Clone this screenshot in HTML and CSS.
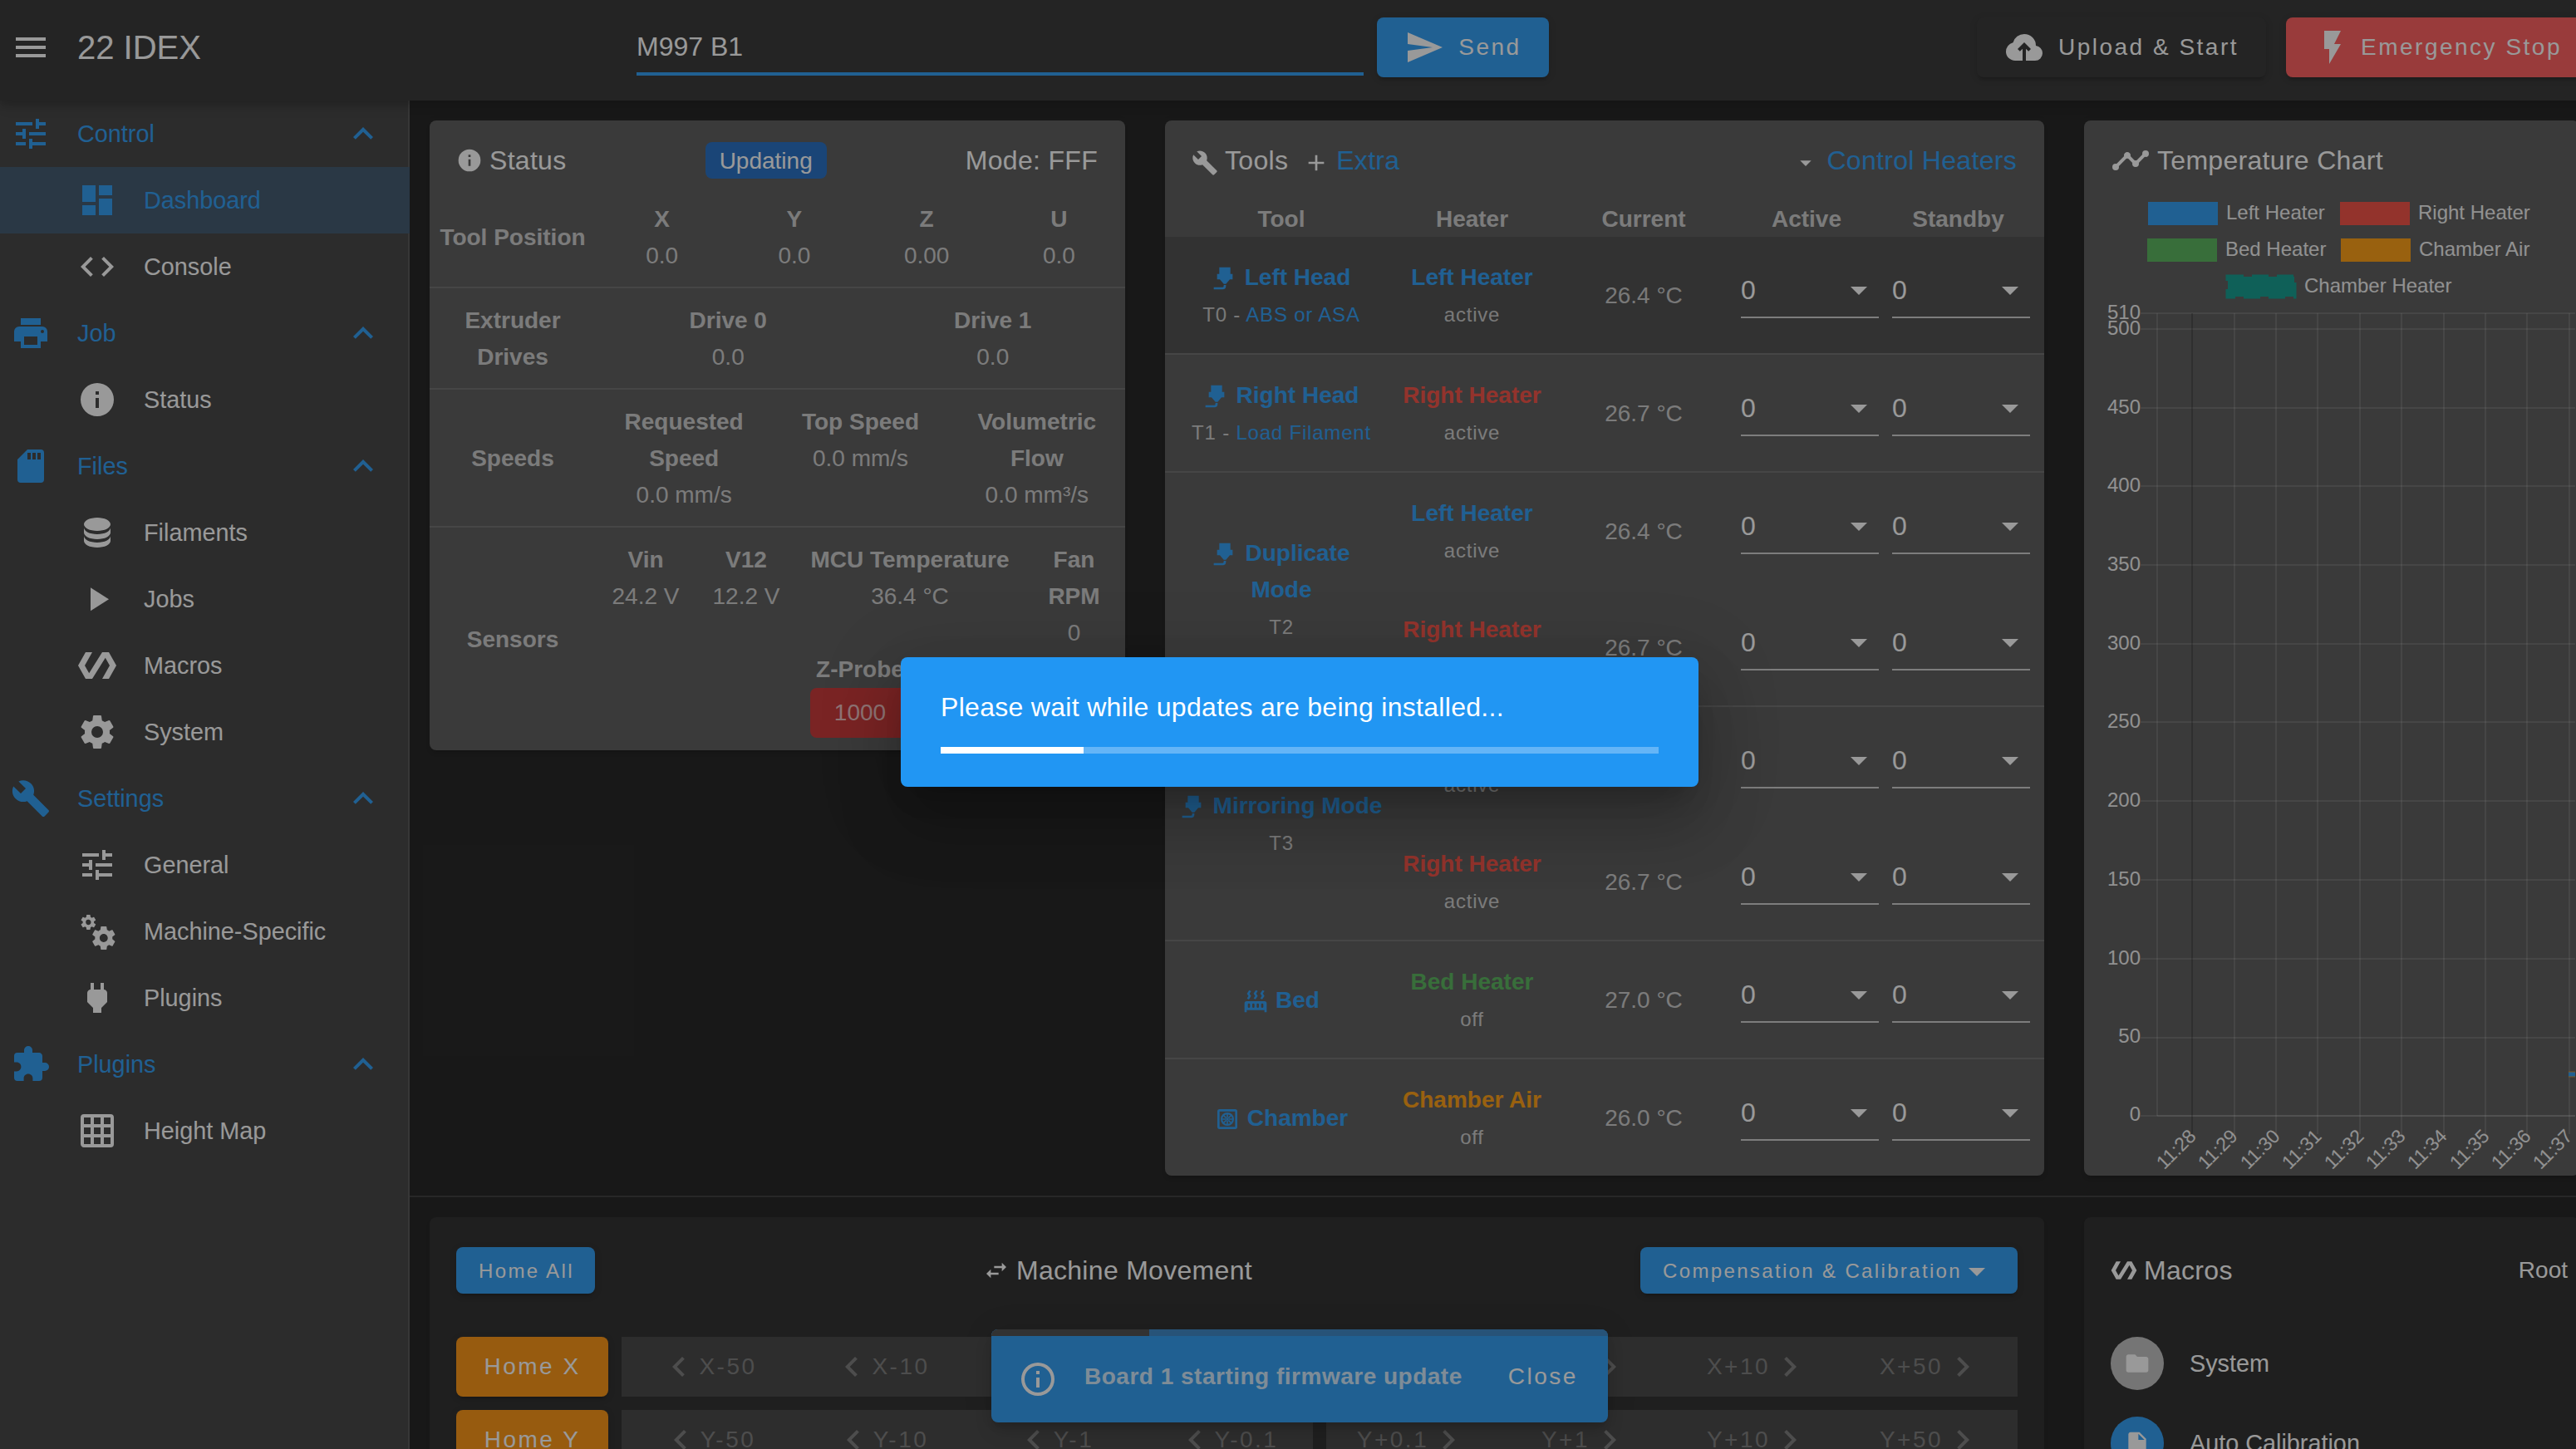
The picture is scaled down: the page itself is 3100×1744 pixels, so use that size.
FILE: index.html
```
<!DOCTYPE html>
<html lang="en">
<head>
  <meta charset="UTF-8" />
  <title>22 IDEX</title>
  <link rel="stylesheet" href="styles.css">
</head>
<body>
  <!-- Icon set -->
  <svg class="icon-defs" width="0" height="0">
    <symbol id="menu" viewBox="0 0 24 24"><path d="M3,6H21V8H3V6M3,11H21V13H3V11M3,16H21V18H3V16Z"/></symbol>
    <symbol id="tune" viewBox="0 0 24 24"><path d="M3,17V19H9V17H3M3,5V7H13V5H3M13,21V19H21V17H13V15H11V21H13M7,9V11H3V13H7V15H9V9H7M21,13V11H11V13H21M15,9H17V7H21V5H17V3H15V9Z"/></symbol>
    <symbol id="dashboard" viewBox="0 0 24 24"><path d="M13,3V9H21V3M13,21H21V11H13M3,21H11V15H3M3,13H11V3H3V13Z"/></symbol>
    <symbol id="code" viewBox="0 0 24 24"><path d="M14.6,16.6L19.2,12L14.6,7.4L16,6L22,12L16,18L14.6,16.6M9.4,16.6L4.8,12L9.4,7.4L8,6L2,12L8,18L9.4,16.6Z"/></symbol>
    <symbol id="printer" viewBox="0 0 24 24"><path d="M18,3H6V7H18M19,12A1,1 0 0,1 18,11A1,1 0 0,1 19,10A1,1 0 0,1 20,11A1,1 0 0,1 19,12M16,19H8V14H16M19,8H5A3,3 0 0,0 2,11V17H6V21H18V17H22V11A3,3 0 0,0 19,8Z"/></symbol>
    <symbol id="info" viewBox="0 0 24 24"><path d="M13,9H11V7H13M13,17H11V11H13M12,2A10,10 0 0,0 2,12A10,10 0 0,0 12,22A10,10 0 0,0 22,12A10,10 0 0,0 12,2Z"/></symbol>
    <symbol id="info-outline" viewBox="0 0 24 24"><path d="M11,9H13V7H11M12,20C7.59,20 4,16.41 4,12C4,7.59 7.59,4 12,4C16.41,4 20,7.59 20,12C20,16.41 16.41,20 12,20M12,2A10,10 0 0,0 2,12A10,10 0 0,0 12,22A10,10 0 0,0 22,12A10,10 0 0,0 12,2M11,17H13V11H11V17Z"/></symbol>
    <symbol id="sd" viewBox="0 0 24 24"><path d="M18,8H16V4H18M15,8H13V4H15M12,8H10V4H12M18,2H10L4,8V20A2,2 0 0,0 6,22H18A2,2 0 0,0 20,20V4A2,2 0 0,0 18,2Z"/></symbol>
    <symbol id="database" viewBox="0 0 24 24"><path d="M12,3C7.58,3 4,4.79 4,7C4,9.21 7.58,11 12,11C16.42,11 20,9.21 20,7C20,4.79 16.42,3 12,3M4,9V12C4,14.21 7.58,16 12,16C16.42,16 20,14.21 20,12V9C20,11.21 16.42,13 12,13C7.58,13 4,11.21 4,9M4,14V17C4,19.21 7.58,21 12,21C16.42,21 20,19.21 20,17V14C20,16.21 16.42,18 12,18C7.58,18 4,16.21 4,14Z"/></symbol>
    <symbol id="play" viewBox="0 0 24 24"><path d="M8,5.14V19.14L19,12.14L8,5.14Z"/></symbol>
    <symbol id="polymer" viewBox="0 0 24 24"><path d="M19,4H15L7.1,16.63L4.5,12L9,4H5L0.5,12L5,20H9L16.89,7.37L19.5,12L15,20H19L23.5,12L19,4Z"/></symbol>
    <symbol id="cog" viewBox="0 0 24 24"><path d="M12,15.5A3.5,3.5 0 0,1 8.5,12A3.5,3.5 0 0,1 12,8.5A3.5,3.5 0 0,1 15.5,12A3.5,3.5 0 0,1 12,15.5M19.43,12.97C19.47,12.65 19.5,12.33 19.5,12C19.5,11.67 19.47,11.34 19.43,11L21.54,9.37C21.73,9.22 21.78,8.95 21.66,8.73L19.66,5.27C19.54,5.05 19.27,4.96 19.05,5.05L16.56,6.05C16.04,5.66 15.5,5.32 14.87,5.07L14.5,2.42C14.46,2.18 14.25,2 14,2H10C9.75,2 9.54,2.18 9.5,2.42L9.13,5.07C8.5,5.32 7.96,5.66 7.44,6.05L4.95,5.05C4.73,4.96 4.46,5.05 4.34,5.27L2.34,8.73C2.21,8.95 2.27,9.22 2.46,9.37L4.57,11C4.53,11.34 4.5,11.67 4.5,12C4.5,12.33 4.53,12.65 4.57,12.97L2.46,14.63C2.27,14.78 2.21,15.05 2.34,15.27L4.34,18.73C4.46,18.95 4.73,19.03 4.95,18.95L7.44,17.94C7.96,18.34 8.5,18.68 9.13,18.93L9.5,21.58C9.54,21.82 9.75,22 10,22H14C14.25,22 14.46,21.82 14.5,21.58L14.87,18.93C15.5,18.67 16.04,18.34 16.56,17.94L19.05,18.95C19.27,19.03 19.54,18.95 19.66,18.73L21.66,15.27C21.78,15.05 21.73,14.78 21.54,14.63L19.43,12.97Z"/></symbol>
    <symbol id="cogs" viewBox="0 0 24 24"><path d="M15.9,18.45C17.25,18.45 18.35,17.35 18.35,16C18.35,14.65 17.25,13.55 15.9,13.55C14.54,13.55 13.45,14.65 13.45,16C13.45,17.35 14.54,18.45 15.9,18.45M21.1,16.68L22.58,17.84C22.71,17.95 22.75,18.13 22.66,18.29L21.26,20.71C21.17,20.86 21,20.92 20.83,20.86L19.09,20.16C18.73,20.44 18.33,20.67 17.91,20.85L17.64,22.7C17.62,22.87 17.47,23 17.3,23H14.5C14.32,23 14.18,22.87 14.15,22.7L13.89,20.85C13.46,20.67 13.07,20.44 12.71,20.16L10.96,20.86C10.81,20.92 10.62,20.86 10.54,20.71L9.14,18.29C9.05,18.13 9.09,17.95 9.22,17.84L10.7,16.68L10.65,16L10.7,15.31L9.22,14.16C9.09,14.05 9.05,13.86 9.14,13.71L10.54,11.29C10.62,11.13 10.81,11.07 10.96,11.13L12.71,11.84C13.07,11.56 13.46,11.32 13.89,11.15L14.15,9.29C14.18,9.13 14.32,9 14.5,9H17.3C17.47,9 17.62,9.13 17.64,9.29L17.91,11.15C18.33,11.32 18.73,11.56 19.09,11.84L20.83,11.13C21,11.07 21.17,11.13 21.26,11.29L22.66,13.71C22.75,13.86 22.71,14.05 22.58,14.16L21.1,15.31L21.15,16L21.1,16.68M6.69,8.07C7.56,8.07 8.26,7.37 8.26,6.5C8.26,5.63 7.56,4.92 6.69,4.92A1.58,1.58 0 0,0 5.11,6.5C5.11,7.37 5.82,8.07 6.69,8.07M10.03,6.94L11,7.68C11.07,7.75 11.09,7.87 11.03,7.97L10.13,9.53C10.08,9.63 9.96,9.67 9.86,9.63L8.74,9.18L8,9.62L7.81,10.81C7.79,10.92 7.7,11 7.59,11H5.79C5.67,11 5.58,10.92 5.56,10.81L5.4,9.62L4.64,9.18L3.52,9.63C3.41,9.67 3.3,9.63 3.24,9.53L2.34,7.97C2.28,7.87 2.31,7.75 2.39,7.68L3.34,6.94L3.31,6.5L3.34,6.06L2.39,5.32C2.31,5.25 2.28,5.13 2.34,5.03L3.24,3.47C3.3,3.37 3.41,3.33 3.52,3.37L4.63,3.82L5.4,3.38L5.56,2.19C5.58,2.08 5.67,2 5.79,2H7.59C7.7,2 7.79,2.08 7.81,2.19L8,3.38L8.74,3.82L9.86,3.37C9.96,3.33 10.08,3.37 10.13,3.47L11.03,5.03C11.09,5.13 11.07,5.25 11,5.32L10.03,6.06L10.06,6.5L10.03,6.94Z"/></symbol>
    <symbol id="wrench" viewBox="0 0 24 24"><path d="M22.7,19L13.6,9.9C14.5,7.6 14,4.9 12.1,3C10.1,1 7.1,0.6 4.7,1.7L9,6L6,9L1.6,4.7C0.4,7.1 0.9,10.1 2.9,12.1C4.8,14 7.5,14.5 9.8,13.6L18.9,22.7C19.3,23.1 19.9,23.1 20.3,22.7L22.6,20.4C23.1,20 23.1,19.3 22.7,19Z"/></symbol>
    <symbol id="plug" viewBox="0 0 24 24"><path d="M16,7V3H14V7H10V3H8V7C7,7 6,8 6,9V14.5L9.5,18V21H14.5V18L18,14.5V9C18,8 17,7 16,7Z"/></symbol>
    <symbol id="puzzle" viewBox="0 0 24 24"><path d="M20.5,11H19V7C19,5.89 18.1,5 17,5H13V3.5A2.5,2.5 0 0,0 10.5,1A2.5,2.5 0 0,0 8,3.5V5H4A2,2 0 0,0 2,7V10.8H3.5C5,10.8 6.2,12 6.2,13.5C6.2,15 5,16.2 3.5,16.2H2V20A2,2 0 0,0 4,22H7.8V20.5C7.8,19 9,17.8 10.5,17.8C12,17.8 13.2,19 13.2,20.5V22H17A2,2 0 0,0 19,20V16H20.5A2.5,2.5 0 0,0 23,13.5A2.5,2.5 0 0,0 20.5,11Z"/></symbol>
    <symbol id="grid" viewBox="0 0 24 24"><path d="M10,4V8H14V4H10M16,4V8H20V4H16M16,10V14H20V10H16M16,16V20H20V16H16M14,20V16H10V20H14M8,20V16H4V20H8M8,14V10H4V14H8M8,8V4H4V8H8M10,14H14V10H10V14M4,2H20A2,2 0 0,1 22,4V20A2,2 0 0,1 20,22H4C2.92,22 2,21.1 2,20V4A2,2 0 0,1 4,2Z"/></symbol>
    <symbol id="up" viewBox="0 0 24 24"><path d="M7.41,15.41L12,10.83L16.59,15.41L18,14L12,8L6,14L7.41,15.41Z"/></symbol>
    <symbol id="left" viewBox="0 0 24 24"><path d="M15.41,16.58L10.83,12L15.41,7.41L14,6L8,12L14,18L15.41,16.58Z"/></symbol>
    <symbol id="right" viewBox="0 0 24 24"><path d="M8.59,16.58L13.17,12L8.59,7.41L10,6L16,12L10,18L8.59,16.58Z"/></symbol>
    <symbol id="caret" viewBox="0 0 24 24"><path d="M7,10L12,15L17,10H7Z"/></symbol>
    <symbol id="plus" viewBox="0 0 24 24"><path d="M19,13H13V19H11V13H5V11H11V5H13V11H19V13Z"/></symbol>
    <symbol id="send" viewBox="0 0 24 24"><path d="M2,21L23,12L2,3V10L17,12L2,14V21Z"/></symbol>
    <symbol id="upload" viewBox="0 0 24 24"><path d="M11 20H6.5Q4.22 20 2.61 18.43 1 16.85 1 14.58 1 12.63 2.17 11.1 3.35 9.57 5.25 9.15 5.88 6.85 7.75 5.43 9.63 4 12 4 14.93 4 16.96 6.04 19 8.07 19 11 20.73 11.2 21.86 12.5 23 13.78 23 15.5 23 17.38 21.69 18.69 20.38 20 18.5 20H13V12.85L14.6 14.4L16 13L12 9L8 13L9.4 14.4L11 12.85Z"/></symbol>
    <symbol id="flash" viewBox="0 0 24 24"><path d="M7,2V13H10V22L17,10H13L17,2H7Z"/></symbol>
    <symbol id="chart" viewBox="0 0 24 24"><path d="M3,14L3.5,14.07L8.07,9.5C7.89,8.85 8.06,8.11 8.59,7.59C9.37,6.8 10.63,6.8 11.41,7.59C11.94,8.11 12.11,8.85 11.93,9.5L14.5,12.07L15,12C15.18,12 15.35,12 15.5,12.07L19.07,8.5C19,8.35 19,8.18 19,8A2,2 0 0,1 21,6A2,2 0 0,1 23,8A2,2 0 0,1 21,10C20.82,10 20.65,10 20.5,9.93L16.93,13.5C17,13.65 17,13.82 17,14A2,2 0 0,1 15,16A2,2 0 0,1 13,14L13.07,13.5L10.5,10.93C10.18,11 9.82,11 9.5,10.93L4.93,15.5L5,16A2,2 0 0,1 3,18A2,2 0 0,1 1,16A2,2 0 0,1 3,14Z"/></symbol>
    <symbol id="nozzle" viewBox="0 0 24 24"><path d="M7,2H17V8H19V13H16.5L13,17H11L7.5,13H5V8H7V2M10,22H2V20H10A1,1 0 0,0 11,19V18H13V19A3,3 0 0,1 10,22Z"/></symbol>
    <symbol id="radiator" viewBox="0 0 24 24"><path d="M7.95,3L6.53,5.19L7.95,7.4H7.94L5.95,10.5L4.22,9.6L5.64,7.39L4.22,5.19L6.22,2.09L7.95,3M13.95,2.89L12.53,5.1L13.95,7.3L13.94,7.31L11.95,10.4L10.22,9.5L11.64,7.3L10.22,5.1L12.22,2L13.95,2.89M20,2.89L18.56,5.1L20,7.3V7.31L18,10.4L16.25,9.5L17.67,7.3L16.25,5.1L18.25,2L20,2.89M2,22V14A2,2 0 0,1 4,12H20A2,2 0 0,1 22,14V22H20V20H4V22H2M6,14A1,1 0 0,0 5,15V17A1,1 0 0,0 6,18A1,1 0 0,0 7,17V15A1,1 0 0,0 6,14M10,14A1,1 0 0,0 9,15V17A1,1 0 0,0 10,18A1,1 0 0,0 11,17V15A1,1 0 0,0 10,14M14,14A1,1 0 0,0 13,15V17A1,1 0 0,0 14,18A1,1 0 0,0 15,17V15A1,1 0 0,0 14,14M18,14A1,1 0 0,0 17,15V17A1,1 0 0,0 18,18A1,1 0 0,0 19,17V15A1,1 0 0,0 18,14Z"/></symbol>
    <symbol id="chamber" viewBox="0 0 24 24">
      <g fill="none" stroke="currentColor">
        <rect x="4" y="4" width="16" height="16" rx="1" stroke-width="2"/>
        <circle cx="12" cy="12" r="5.2" stroke-width="1.6"/>
        <path stroke-width="1.2" d="M12,7V10.5M12,13.5V17M7,12H10.5M13.5,12H17M8.5,8.5L11,11M13,13L15.5,15.5M15.5,8.5L13,11M11,13L8.5,15.5"/>
      </g>
      <circle cx="12" cy="12" r="1.3"/>
    </symbol>
    <symbol id="swap" viewBox="0 0 24 24"><path d="M21,9L17,5V8H10V10H17V13M7,11L3,15L7,19V16H14V14H7V11Z"/></symbol>
    <symbol id="folder" viewBox="0 0 24 24"><path d="M10,4H4C2.89,4 2,4.89 2,6V18A2,2 0 0,0 4,20H20A2,2 0 0,0 22,18V8C22,6.89 21.1,6 20,6H12L10,4Z"/></symbol>
    <symbol id="file" viewBox="0 0 24 24"><path d="M13,9V3.5L18.5,9M6,2C4.89,2 4,2.89 4,4V20A2,2 0 0,0 6,22H18A2,2 0 0,0 20,20V8L14,2H6Z"/></symbol>
  </svg>

  <div class="app">
    <header class="toolbar">
      <svg class="icon"><use href="#menu"/></svg>
      <div class="toolbar-title">22 IDEX</div>
      <div class="code-input">M997 B1</div>
      <button class="btn primary send"><svg class="icon"><use href="#send"/></svg>Send</button>
      <button class="btn upload"><svg class="icon"><use href="#upload"/></svg>Upload &amp; Start</button>
      <button class="btn danger"><svg class="icon"><use href="#flash"/></svg>Emergency Stop</button>
    </header>

    <div class="main">
      <nav class="sidebar">
        <div class="nav-group"><svg class="icon"><use href="#tune"/></svg><span>Control</span><svg class="icon"><use href="#up"/></svg></div>
        <div class="nav-item active"><svg class="icon"><use href="#dashboard"/></svg><span>Dashboard</span></div>
        <div class="nav-item"><svg class="icon"><use href="#code"/></svg><span>Console</span></div>
        <div class="nav-group"><svg class="icon"><use href="#printer"/></svg><span>Job</span><svg class="icon"><use href="#up"/></svg></div>
        <div class="nav-item"><svg class="icon"><use href="#info"/></svg><span>Status</span></div>
        <div class="nav-group"><svg class="icon"><use href="#sd"/></svg><span>Files</span><svg class="icon"><use href="#up"/></svg></div>
        <div class="nav-item"><svg class="icon"><use href="#database"/></svg><span>Filaments</span></div>
        <div class="nav-item"><svg class="icon"><use href="#play"/></svg><span>Jobs</span></div>
        <div class="nav-item"><svg class="icon"><use href="#polymer"/></svg><span>Macros</span></div>
        <div class="nav-item"><svg class="icon"><use href="#cog"/></svg><span>System</span></div>
        <div class="nav-group"><svg class="icon"><use href="#wrench"/></svg><span>Settings</span><svg class="icon"><use href="#up"/></svg></div>
        <div class="nav-item"><svg class="icon"><use href="#tune"/></svg><span>General</span></div>
        <div class="nav-item"><svg class="icon"><use href="#cogs"/></svg><span>Machine-Specific</span></div>
        <div class="nav-item"><svg class="icon"><use href="#plug"/></svg><span>Plugins</span></div>
        <div class="nav-group"><svg class="icon"><use href="#puzzle"/></svg><span>Plugins</span><svg class="icon"><use href="#up"/></svg></div>
        <div class="nav-item"><svg class="icon"><use href="#grid"/></svg><span>Height Map</span></div>
      </nav>

      <div class="content">
        <div class="top-row">
          <section class="card status">
            <div class="card-title spread">
              <span class="title"><svg class="icon small"><use href="#info"/></svg>Status</span>
              <span class="chip">Updating</span>
              <span>Mode: FFF</span>
            </div>
            <div class="stat-row">
              <strong>Tool Position</strong>
              <div class="stats">
                <div><strong>X</strong><br>0.0</div>
                <div><strong>Y</strong><br>0.0</div>
                <div><strong>Z</strong><br>0.00</div>
                <div><strong>U</strong><br>0.0</div>
              </div>
            </div>
            <div class="stat-row">
              <strong>Extruder<br>Drives</strong>
              <div class="stats">
                <div><strong>Drive 0</strong><br>0.0</div>
                <div><strong>Drive 1</strong><br>0.0</div>
              </div>
            </div>
            <div class="stat-row">
              <strong>Speeds</strong>
              <div class="stats">
                <div><strong>Requested<br>Speed</strong><br>0.0 mm/s</div>
                <div><strong>Top Speed</strong><br>0.0 mm/s</div>
                <div><strong>Volumetric<br>Flow</strong><br>0.0 mm³/s</div>
              </div>
            </div>
            <div class="stat-row">
              <strong>Sensors</strong>
              <div class="sensors">
                <div><strong>Vin</strong><br>24.2 V</div>
                <div><strong>V12</strong><br>12.2 V</div>
                <div><strong>MCU Temperature</strong><br>36.4 °C</div>
                <div><strong>Fan<br>RPM</strong><br>0</div>
                <div class="probe"><strong>Z-Probe</strong><span class="probe-value">1000</span></div>
              </div>
            </div>
          </section>

          <section class="card tools">
            <div class="card-title">
              <span class="title low"><svg class="icon small"><use href="#wrench"/></svg>Tools</span>
              <span class="title low extra"><svg class="icon small"><use href="#plus"/></svg><a>Extra</a></span>
              <span class="title low heaters"><svg class="icon small"><use href="#caret"/></svg><a>Control Heaters</a></span>
            </div>
            <div class="tools-head">
              <span>Tool</span><span>Heater</span><span>Current</span><span class="set">Active</span><span class="set">Standby</span>
            </div>

            <div class="tool selected">
              <div class="tool-name">
                <div><b><svg class="icon small"><use href="#nozzle"/></svg>Left Head</b><br><small>T0 - <a>ABS or ASA</a></small></div>
              </div>
              <div class="heater">
                <div><b class="blue">Left Heater</b><br><small>active</small></div>
                <div>26.4 °C</div>
                <div class="field"><span>0</span><svg class="icon"><use href="#caret"/></svg></div>
                <div class="field"><span>0</span><svg class="icon"><use href="#caret"/></svg></div>
              </div>
            </div>

            <div class="tool">
              <div class="tool-name">
                <div><b><svg class="icon small"><use href="#nozzle"/></svg>Right Head</b><br><small>T1 - <a>Load Filament</a></small></div>
              </div>
              <div class="heater">
                <div><b class="red">Right Heater</b><br><small>active</small></div>
                <div>26.7 °C</div>
                <div class="field"><span>0</span><svg class="icon"><use href="#caret"/></svg></div>
                <div class="field"><span>0</span><svg class="icon"><use href="#caret"/></svg></div>
              </div>
            </div>

            <div class="tool">
              <div class="tool-name">
                <div><b><svg class="icon small"><use href="#nozzle"/></svg>Duplicate<br>Mode</b><br><small>T2</small></div>
              </div>
              <div>
                <div class="heater">
                  <div><b class="blue">Left Heater</b><br><small>active</small></div>
                  <div>26.4 °C</div>
                  <div class="field"><span>0</span><svg class="icon"><use href="#caret"/></svg></div>
                  <div class="field"><span>0</span><svg class="icon"><use href="#caret"/></svg></div>
                </div>
                <div class="heater">
                  <div><b class="red">Right Heater</b><br><small>active</small></div>
                  <div>26.7 °C</div>
                  <div class="field"><span>0</span><svg class="icon"><use href="#caret"/></svg></div>
                  <div class="field"><span>0</span><svg class="icon"><use href="#caret"/></svg></div>
                </div>
              </div>
            </div>

            <div class="tool">
              <div class="tool-name">
                <div><b><svg class="icon small"><use href="#nozzle"/></svg>Mirroring Mode</b><br><small>T3</small></div>
              </div>
              <div>
                <div class="heater">
                  <div><b class="blue">Left Heater</b><br><small>active</small></div>
                  <div>26.4 °C</div>
                  <div class="field"><span>0</span><svg class="icon"><use href="#caret"/></svg></div>
                  <div class="field"><span>0</span><svg class="icon"><use href="#caret"/></svg></div>
                </div>
                <div class="heater">
                  <div><b class="red">Right Heater</b><br><small>active</small></div>
                  <div>26.7 °C</div>
                  <div class="field"><span>0</span><svg class="icon"><use href="#caret"/></svg></div>
                  <div class="field"><span>0</span><svg class="icon"><use href="#caret"/></svg></div>
                </div>
              </div>
            </div>

            <div class="tool">
              <div class="tool-name">
                <div><b><svg class="icon small"><use href="#radiator"/></svg>Bed</b></div>
              </div>
              <div class="heater">
                <div><b class="green">Bed Heater</b><br><small>off</small></div>
                <div>27.0 °C</div>
                <div class="field"><span>0</span><svg class="icon"><use href="#caret"/></svg></div>
                <div class="field"><span>0</span><svg class="icon"><use href="#caret"/></svg></div>
              </div>
            </div>

            <div class="tool">
              <div class="tool-name">
                <div><b><svg class="icon small"><use href="#chamber"/></svg>Chamber</b></div>
              </div>
              <div class="heater">
                <div><b class="orange">Chamber Air</b><br><small>off</small></div>
                <div>26.0 °C</div>
                <div class="field"><span>0</span><svg class="icon"><use href="#caret"/></svg></div>
                <div class="field"><span>0</span><svg class="icon"><use href="#caret"/></svg></div>
              </div>
            </div>
          </section>

          <section class="card chart-card">
            <div class="card-title">
              <span class="title"><svg class="icon"><use href="#chart"/></svg>Temperature Chart</span>
            </div>
            <svg class="chart" width="596" height="1190">
              <!-- legend -->
              <rect x="77" y="18" width="84" height="28" fill="#2196f3"/>
              <text x="171" y="39">Left Heater</text>
              <rect x="308" y="18" width="84" height="28" fill="#f44336"/>
              <text x="402" y="39">Right Heater</text>
              <rect x="76" y="62" width="84" height="28" fill="#4caf50"/>
              <text x="170" y="83">Bed Heater</text>
              <rect x="309" y="62" width="84" height="28" fill="#ff9800"/>
              <text x="403" y="83">Chamber Air</text>
              <rect x="173" y="108" width="80" height="24" fill="#009688"/>
              <rect x="172" y="107" width="82" height="26" fill="none" stroke="#009688" stroke-width="3" stroke-dasharray="20 10"/>
              <text x="265" y="127">Chamber Heater</text>

              <!-- grid -->
              <path class="grid-line" d="M68,152H591M68,171H591M68,266H591M68,360H591M68,455H591M68,550H591M68,644H591M68,739H591M68,834H591M68,929H591M68,1024H591M68,1118H591"/>
              <path class="grid-line" d="M88,152V1118M181,152V1140M231,152V1140M281,152V1140M332,152V1140M382,152V1140M433,152V1140M483,152V1140M533,152V1140M584,152V1140"/>
              <path class="grid-line" d="M88,1118H591"/>
              <path class="grid-line dark" d="M130,152V1140"/>

              <!-- temperature axis -->
              <g text-anchor="end">
                <text x="68" y="159">510</text>
                <text x="68" y="178">500</text>
                <text x="68" y="273">450</text>
                <text x="68" y="367">400</text>
                <text x="68" y="462">350</text>
                <text x="68" y="557">300</text>
                <text x="68" y="651">250</text>
                <text x="68" y="746">200</text>
                <text x="68" y="841">150</text>
                <text x="68" y="936">100</text>
                <text x="68" y="1030">50</text>
                <text x="68" y="1124">0</text>
              </g>

              <!-- time axis -->
              <g class="time-axis" text-anchor="end">
                <text transform="translate(136 1144) rotate(-45)">11:28</text>
                <text transform="translate(186 1144) rotate(-45)">11:29</text>
                <text transform="translate(237 1144) rotate(-45)">11:30</text>
                <text transform="translate(287 1144) rotate(-45)">11:31</text>
                <text transform="translate(338 1144) rotate(-45)">11:32</text>
                <text transform="translate(388 1144) rotate(-45)">11:33</text>
                <text transform="translate(438 1144) rotate(-45)">11:34</text>
                <text transform="translate(489 1144) rotate(-45)">11:35</text>
                <text transform="translate(539 1144) rotate(-45)">11:36</text>
                <text transform="translate(589 1144) rotate(-45)">11:37</text>
              </g>

              <path d="M583,1068H591" stroke="#ff9800" stroke-width="7" opacity=".7"/>
              <path d="M583,1068H591" stroke="#2196f3" stroke-width="5"/>
            </svg>
          </section>
        </div>

        <div class="divider"></div>

        <div class="bottom-row">
          <section class="card plain movement">
            <div class="movement-title">
              <button class="btn small primary">Home All</button>
              <span class="title"><svg class="icon small"><use href="#swap"/></svg>Machine Movement</span>
              <button class="btn small primary">Compensation &amp; Calibration<svg class="icon"><use href="#caret"/></svg></button>
            </div>
            <div class="move-row">
              <button class="btn warning">Home X</button>
              <div class="moves">
                <span><svg class="icon"><use href="#left"/></svg>X-50</span>
                <span><svg class="icon"><use href="#left"/></svg>X-10</span>
                <span><svg class="icon"><use href="#left"/></svg>X-1</span>
                <span><svg class="icon"><use href="#left"/></svg>X-0.1</span>
              </div>
              <div class="moves">
                <span>X+0.1<svg class="icon"><use href="#right"/></svg></span>
                <span>X+1<svg class="icon"><use href="#right"/></svg></span>
                <span>X+10<svg class="icon"><use href="#right"/></svg></span>
                <span>X+50<svg class="icon"><use href="#right"/></svg></span>
              </div>
            </div>
            <div class="move-row">
              <button class="btn warning">Home Y</button>
              <div class="moves">
                <span><svg class="icon"><use href="#left"/></svg>Y-50</span>
                <span><svg class="icon"><use href="#left"/></svg>Y-10</span>
                <span><svg class="icon"><use href="#left"/></svg>Y-1</span>
                <span><svg class="icon"><use href="#left"/></svg>Y-0.1</span>
              </div>
              <div class="moves">
                <span>Y+0.1<svg class="icon"><use href="#right"/></svg></span>
                <span>Y+1<svg class="icon"><use href="#right"/></svg></span>
                <span>Y+10<svg class="icon"><use href="#right"/></svg></span>
                <span>Y+50<svg class="icon"><use href="#right"/></svg></span>
              </div>
            </div>
          </section>

          <section class="card plain macros">
            <div class="macros-title">
              <span class="title"><svg class="icon small"><use href="#polymer"/></svg>Macros</span>
              <span class="path">Root</span>
            </div>
            <div class="macro"><span class="avatar"><svg class="icon small"><use href="#folder"/></svg></span>System</div>
            <div class="macro"><span class="avatar file"><svg class="icon small"><use href="#file"/></svg></span>Auto Calibration</div>
          </section>
        </div>
      </div>
    </div>

    <div class="snackbar">
      <div class="snackbar-progress"><div class="bar"></div></div>
      <svg class="icon"><use href="#info-outline"/></svg>
      <strong>Board 1 starting firmware update</strong>
      <span class="close">Close</span>
    </div>

    <div class="overlay"></div>

    <div class="dialog">
      <p>Please wait while updates are being installed...</p>
      <div class="progress"><div class="bar"></div></div>
    </div>
  </div>
</body>
</html>
```
FILE: styles.css
```
* {
  box-sizing: border-box;
}
body {
  margin: 0;
  overflow: hidden;
  background: #121212;
  color: #fff;
  font-family: "Liberation Sans", Arial, sans-serif;
  font-size: 28px;
}
.app {
  position: relative;
  width: 3128px;
  height: 1744px;
  overflow: hidden;
}
.icon-defs {
  display: block;
}
.icon {
  width: 48px;
  height: 48px;
  flex: none;
  fill: currentColor;
}
.icon.small {
  width: 32px;
  height: 32px;
}
a, .blue {
  color: #2196f3;
}
.red {
  color: #f44336;
}
.green {
  color: #4caf50;
}
.orange {
  color: #ff9800;
}

/* Buttons */
.btn {
  display: flex;
  align-items: center;
  justify-content: center;
  height: 72px;
  padding: 0 32px;
  border: none;
  border-radius: 8px;
  color: #fff;
  background: #272727;
  font-family: inherit;
  font-size: 28px;
  letter-spacing: 2.5px;
  white-space: nowrap;
  box-shadow: 0 6px 2px -4px rgba(0, 0, 0, 0.2), 0 4px 4px rgba(0, 0, 0, 0.14), 0 2px 10px rgba(0, 0, 0, 0.12);
}
.btn.small {
  height: 56px;
  padding: 1px 25px 0 27px;
  font-size: 24px;
  letter-spacing: 2.35px;
}
.btn.primary {
  background: #2196f3;
}
.btn.danger {
  justify-content: flex-start;
  background: #ff5252;
  width: 361px;
}
.btn.warning {
  background: #fb8c00;
  width: 183px;
}

/* Toolbar */
.toolbar {
  position: relative;
  z-index: 2;
  display: flex;
  align-items: center;
  height: 121px;
  padding: 0 16px 7px 13px;
  background: #272727;
  box-shadow: 0 4px 8px -2px rgba(0, 0, 0, 0.2), 0 8px 10px rgba(0, 0, 0, 0.14), 0 2px 20px rgba(0, 0, 0, 0.12);
}
.toolbar-title {
  width: 673px;
  margin-left: 32px;
  font-size: 40px;
}
.code-input {
  width: 875px;
  height: 68px;
  line-height: 66px;
  border-bottom: 4px solid #2196f3;
  font-size: 32px;
}
.send {
  width: 207px;
  margin-left: 16px;
}
.send .icon, .upload .icon {
  margin-right: 17px;
}
.upload {
  width: 348px;
  margin-left: auto;
  margin-right: 24px;
}
.danger .icon {
  margin-right: 10px;
}

/* Sidebar */
.main {
  display: flex;
  height: 1623px;
}
.sidebar {
  width: 493px;
  flex: none;
  background: #363636;
  border-right: 2px solid #4b4b4b;
  font-size: 28.8px;
}
.nav-group, .nav-item {
  display: flex;
  align-items: center;
  height: 80px;
  margin-right: -2px;
  padding: 0 32px 0 13px;
}
.nav-group {
  color: #2196f3;
}
.nav-group span {
  flex: 1;
  margin-left: 32px;
}
.nav-item {
  padding-left: 93px;
}
.nav-item span {
  margin-left: 32px;
}
.nav-item.active {
  color: #2196f3;
  background: #334d64;
}

/* Content */
.content {
  flex: 1;
}
.top-row {
  display: grid;
  grid-template-columns: 837px 1058px 596px;
  gap: 48px;
  align-items: start;
  height: 1318px;
  padding: 24px;
}
.bottom-row {
  display: grid;
  grid-template-columns: 1943px 596px;
  gap: 48px;
  padding: 24px;
}
.divider {
  height: 2px;
  background: #2e2e2e;
}
.card {
  background: #515151;
  border-radius: 8px;
  color: rgba(255, 255, 255, 0.7);
  box-shadow: 0 6px 2px -4px rgba(0, 0, 0, 0.2), 0 4px 4px rgba(0, 0, 0, 0.14), 0 2px 10px rgba(0, 0, 0, 0.12);
}
.card.plain {
  background: #1e1e1e;
  color: #fff;
  height: 400px;
}
.card-title {
  display: flex;
  align-items: center;
  height: 80px;
  padding: 16px 33px 0 32px;
  color: #fff;
  font-size: 32px;
  letter-spacing: 0.3px;
}
.spread {
  justify-content: space-between;
}
.title {
  display: flex;
  align-items: center;
  font-size: 32px;
  letter-spacing: 0.3px;
}
.title .icon {
  margin-right: 8px;
}
.low .icon {
  margin-top: 5px;
}
.chip {
  height: 44px;
  padding: 1px 17px 0;
  border-radius: 8px;
  background: #1565c0;
  font-size: 28px;
  line-height: 44px;
  letter-spacing: 0;
}

/* Status */
.stat-row {
  display: grid;
  grid-template-columns: 200px 637px;
  align-items: center;
  padding: 17px 0 15px;
  line-height: 44px;
  text-align: center;
}
.stat-row + .stat-row {
  border-top: 2px solid #666;
}
.stats {
  display: grid;
  grid-auto-flow: column;
  grid-auto-columns: 1fr;
}
.sensors {
  display: grid;
  grid-template-columns: 120px 122px 272px 123px;
}
.probe {
  grid-column: 3;
  display: flex;
  flex-direction: column;
  width: 120px;
  margin-left: 16px;
}
.probe-value {
  height: 60px;
  line-height: 60px;
  border-radius: 8px;
  background: #c62828;
}

/* Tools */
.extra {
  margin-left: 18px;
}
.heaters {
  margin-left: auto;
}
.heaters .icon {
  margin-right: 9px;
}
.tools-head {
  display: grid;
  grid-template-columns: 280px 179px 234px 182px 183px;
  height: 60px;
  padding-top: 17px;
  line-height: 44px;
  font-weight: bold;
  text-align: center;
}
.tools-head .set {
  padding-right: 24px;
}
.tool {
  display: grid;
  grid-template-columns: 280px 778px;
  line-height: 44px;
  text-align: center;
}
.tool + .tool {
  border-top: 2px solid #666;
}
.tool.selected {
  background: #424242;
}
.tool-name {
  display: flex;
  align-items: center;
  justify-content: center;
}
.tool-name b {
  color: #2196f3;
}
.tool-name .icon {
  margin: 0 8px 0 -1px;
  vertical-align: -8px;
}
small {
  font-size: 24px;
  letter-spacing: 0.8px;
}
.tool-name div, .heater > div {
  padding-top: 2px;
  white-space: nowrap;
}
.heater {
  display: grid;
  grid-template-columns: 179px 234px 166px 166px;
  align-items: center;
  height: 140px;
}
.field {
  display: flex;
  align-items: center;
  justify-content: space-between;
  height: 68px;
  margin-bottom: 12px;
  border-bottom: 2px solid #cbcbcb;
  color: #fff;
  font-size: 32px;
}
.field + .field {
  margin-left: 16px;
  margin-right: -16px;
}

/* Chart */
.chart {
  display: block;
}
.chart text {
  fill: #f0f0f0;
  font-size: 24px;
}
.chart .time-axis text {
  font-size: 23px;
}
.grid-line {
  fill: none;
  stroke: rgba(255, 255, 255, 0.13);
  stroke-width: 2;
}
.grid-line.dark {
  stroke: rgba(0, 0, 0, 0.25);
}

/* Machine movement */
.movement {
  padding: 36px 32px 0;
}
.movement-title {
  display: flex;
  align-items: center;
  justify-content: space-between;
  height: 56px;
  margin-bottom: 52px;
}
.movement-title .btn .icon {
  margin: 0 0 0 -6px;
}
.move-row {
  display: grid;
  grid-template-columns: 183px 832px 832px;
  gap: 16px;
  margin-bottom: 16px;
}
.moves {
  display: grid;
  grid-template-columns: repeat(4, 1fr);
  height: 72px;
  background: #393939;
  color: #747474;
  letter-spacing: 2.5px;
}
.moves span {
  display: flex;
  align-items: center;
  justify-content: center;
}

/* Macros */
.macros {
  padding: 36px 14px 0 32px;
}
.macros-title {
  display: flex;
  align-items: center;
  justify-content: space-between;
  height: 56px;
  margin-bottom: 52px;
}
.macro {
  display: flex;
  align-items: center;
  height: 64px;
  margin-bottom: 32px;
  font-size: 28.8px;
}
.avatar {
  display: flex;
  align-items: center;
  justify-content: center;
  width: 64px;
  height: 64px;
  margin-right: 31px;
  border-radius: 50%;
  background: #bdbdbd;
}
.avatar.file {
  background: #2196f3;
}

/* Notification */
.snackbar {
  position: absolute;
  z-index: 3;
  left: 1193px;
  top: 1600px;
  display: flex;
  align-items: center;
  width: 742px;
  height: 112px;
  padding: 2px 0 0 32px;
  border-radius: 8px;
  overflow: hidden;
  background: #2196f3;
  box-shadow: 0 6px 10px -2px rgba(0, 0, 0, 0.2), 0 12px 20px rgba(0, 0, 0, 0.14), 0 2px 36px rgba(0, 0, 0, 0.12);
}
.snackbar-progress {
  position: absolute;
  left: 0;
  top: 0;
  width: 100%;
  height: 8px;
  background: #2e7fc2;
}
.snackbar-progress .bar {
  width: 190px;
  height: 8px;
  background: #424242;
}
.snackbar .icon {
  margin: 6px 32px 0 0;
}
.snackbar strong {
  color: rgba(255, 255, 255, 0.8);
  letter-spacing: 0.5px;
}
.close {
  margin-left: 55px;
  letter-spacing: 2.5px;
}

/* Overlay and update dialog */
.overlay {
  position: absolute;
  z-index: 4;
  top: 0; left: 0;
  width: 100%;
  height: 100%;
  background: rgba(33, 33, 33, 0.46);
}
.dialog {
  position: absolute;
  z-index: 5;
  left: 1084px;
  top: 791px;
  width: 960px;
  height: 156px;
  padding: 38px 48px 0;
  border-radius: 8px;
  background: #2196f3;
  box-shadow: 0 22px 30px -14px rgba(0, 0, 0, 0.2), 0 48px 76px 6px rgba(0, 0, 0, 0.14), 0 18px 92px 16px rgba(0, 0, 0, 0.12);
}
.dialog p {
  margin: 0;
  font-size: 32px;
  line-height: 44px;
  letter-spacing: 0.3px;
}
.progress {
  height: 8px;
  margin-top: 26px;
  background: #64b5f7;
}
.progress .bar {
  width: 172px;
  height: 8px;
  background: #fff;
}
```
